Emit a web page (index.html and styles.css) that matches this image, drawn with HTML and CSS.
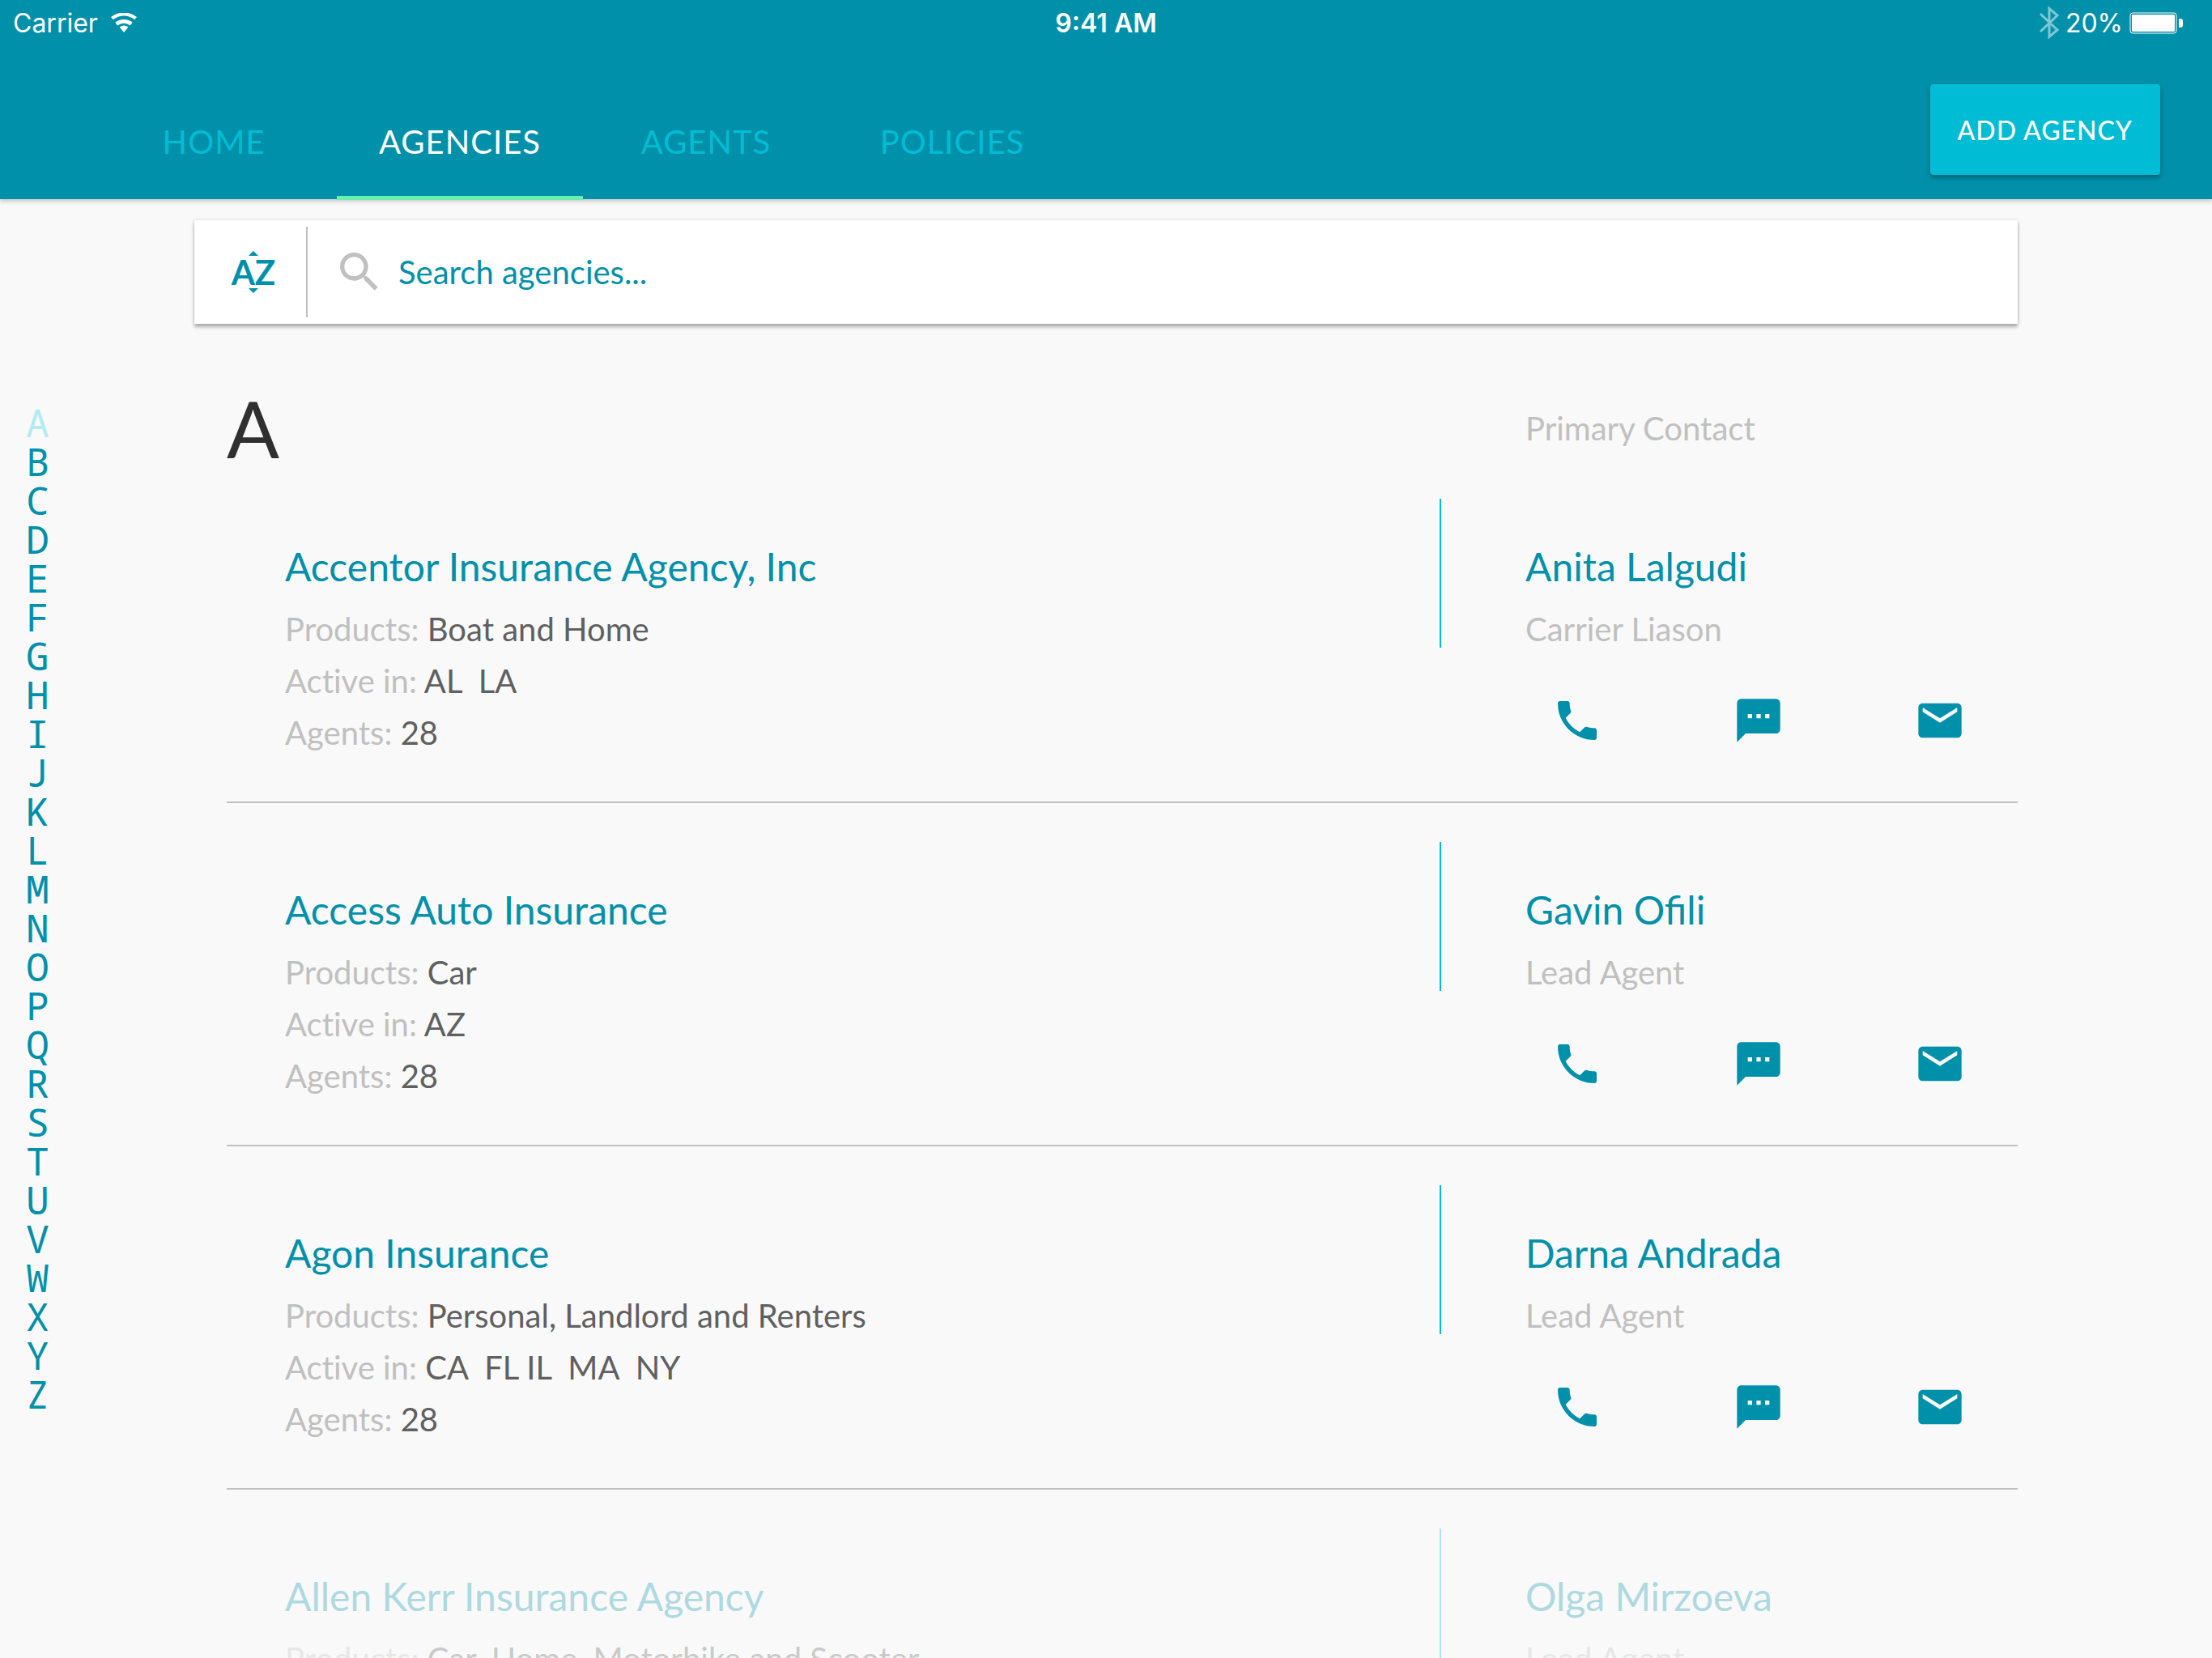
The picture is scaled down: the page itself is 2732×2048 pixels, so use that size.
FILE: index.html
```html
<!DOCTYPE html>
<html lang="en">
<head>
<meta charset="utf-8">
<meta name="viewport" content="width=device-width, initial-scale=1">
<title>Agencies</title>
<link rel="stylesheet" href="styles.css">
</head>
<body>
<svg class="sprite" aria-hidden="true">
  <symbol id="icon-phone" viewBox="0 0 24 24"><path d="M6.62 10.79c1.44 2.83 3.76 5.14 6.59 6.59l2.2-2.2c.27-.27.67-.36 1.02-.24 1.12.37 2.33.57 3.57.57.55 0 1 .45 1 1V20c0 .55-.45 1-1 1-9.39 0-17-7.61-17-17 0-.55.45-1 1-1h3.5c.55 0 1 .45 1 1 0 1.25.2 2.45.57 3.57.11.35.03.74-.25 1.02l-2.2 2.2z"/></symbol>
  <symbol id="icon-message" viewBox="0 0 24 24"><path d="M20 2H4c-1.1 0-1.99.9-1.99 2L2 22l4-4h14c1.1 0 2-.9 2-2V4c0-1.1-.9-2-2-2z"/><path class="icon-cutout" d="M7 9h2v2H7zM11 9h2v2h-2zM15 9h2v2h-2z"/></symbol>
  <symbol id="icon-mail" viewBox="0 0 24 24"><path d="M20 4H4c-1.1 0-1.99.9-1.99 2L2 18c0 1.1.9 2 2 2h16c1.1 0 2-.9 2-2V6c0-1.1-.9-2-2-2z"/><path class="icon-cutout" d="M20 8l-8 5-8-5V6l8 5 8-5v2z"/></symbol>
</svg>

<header class="app-bar">
  <div class="status-bar">
    <div class="status-left">
      <span>Carrier</span>
      <svg class="wifi" viewBox="0 0 32 24" aria-label="Wi-Fi"><path d="M16 24l-5.300-6.600a8.500 8.500 0 0 1 10.600 0zM8.200 15.400l-2.900-3.600a17.300 17.300 0 0 1 21.400 0l-2.900 3.600a12.400 12.400 0 0 0-15.600 0zM2.700 8.200L0 5a25.500 25.500 0 0 1 32 0l-2.700 3.200a21 21 0 0 0-26.600 0z"/></svg>
    </div>
    <span class="status-time">9:41 AM</span>
    <div class="status-right">
      <svg class="bluetooth" viewBox="0 0 24 40" aria-label="Bluetooth"><path d="M1 9l21 20-10 8.500v-35L22 11 1 31"/></svg>
      <span>20%</span>
      <svg class="battery" viewBox="0 0 66 27" aria-label="Battery"><rect class="battery-case" x="1" y="1" width="57" height="25" rx="3"/><rect x="3" y="3" width="53" height="21" rx="1"/><path d="M61 8h2q3 0 3 3v5q0 3-3 3h-2z"/></svg>
    </div>
  </div>
  <div class="toolbar">
    <nav class="tabs">
      <a class="tab" href="#home">HOME</a>
      <a class="tab tab-active" href="#agencies" aria-current="page">AGENCIES</a>
      <a class="tab" href="#agents">AGENTS</a>
      <a class="tab" href="#policies">POLICIES</a>
    </nav>
    <button class="add-button" type="button">ADD AGENCY</button>
  </div>
</header>

<div class="page">
  <nav class="letter-index" aria-label="Jump to letter">
    <a class="letter-current" href="#A">A</a><a href="#B">B</a><a href="#C">C</a><a href="#D">D</a><a href="#E">E</a><a href="#F">F</a><a href="#G">G</a><a href="#H">H</a><a href="#I">I</a><a href="#J">J</a><a href="#K">K</a><a href="#L">L</a><a href="#M">M</a><a href="#N">N</a><a href="#O">O</a><a href="#P">P</a><a href="#Q">Q</a><a href="#R">R</a><a href="#S">S</a><a href="#T">T</a><a href="#U">U</a><a href="#V">V</a><a href="#W">W</a><a href="#X">X</a><a href="#Y">Y</a><a href="#Z">Z</a>
  </nav>

  <main class="content">
    <form class="search" role="search">
      <button class="sort" type="button" aria-label="Sort A to Z">
        <svg class="sort-arrow" viewBox="0 0 12 6"><path d="M0 6l6-6 6 6z"/></svg>
        <span class="sort-text">AZ</span>
        <svg class="sort-arrow" viewBox="0 0 12 6"><path d="M0 0l6 6 6-6z"/></svg>
      </button>
      <label class="search-field">
        <svg class="search-icon" viewBox="0 0 24 24" aria-hidden="true"><path d="M15.500 14h-.79l-.28-.27C15.410 12.590 16 11.110 16 9.500 16 5.910 13.090 3 9.500 3S3 5.910 3 9.500 5.910 16 9.500 16c1.610 0 3.090-.59 4.230-1.570l.27.28v.79l5 4.990L20.490 19l-4.990-5zm-6 0C7.010 14 5 11.990 5 9.500S7.010 5 9.500 5 14 7.010 14 9.500 11.990 14 9.500 14z"/></svg>
        <input class="search-input" type="search" placeholder="Search agencies..." aria-label="Search agencies">
      </label>
    </form>

    <section class="group" id="A">
      <div class="group-head">
        <h1 class="group-letter">A</h1>
        <span class="group-contact">Primary Contact</span>
      </div>

      <article class="agency">
        <div class="agency-info">
          <h2 class="name"><a href="#accentor">Accentor Insurance Agency, Inc</a></h2>
          <p class="fact"><span class="label">Products:</span> Boat and Home</p>
          <p class="fact"><span class="label">Active in:</span> AL&nbsp; LA</p>
          <p class="fact"><span class="label">Agents:</span> 28</p>
        </div>
        <div class="rule"></div>
        <div class="contact">
          <h3 class="name"><a href="#anita">Anita Lalgudi</a></h3>
          <p class="role">Carrier Liason</p>
          <div class="actions">
            <button type="button" aria-label="Call"><svg><use href="#icon-phone"/></svg></button>
            <button type="button" aria-label="Message"><svg><use href="#icon-message"/></svg></button>
            <button type="button" aria-label="Email"><svg><use href="#icon-mail"/></svg></button>
          </div>
        </div>
      </article>

      <article class="agency">
        <div class="agency-info">
          <h2 class="name"><a href="#access">Access Auto Insurance</a></h2>
          <p class="fact"><span class="label">Products:</span> Car</p>
          <p class="fact"><span class="label">Active in:</span> AZ</p>
          <p class="fact"><span class="label">Agents:</span> 28</p>
        </div>
        <div class="rule"></div>
        <div class="contact">
          <h3 class="name"><a href="#gavin">Gavin Ofili</a></h3>
          <p class="role">Lead Agent</p>
          <div class="actions">
            <button type="button" aria-label="Call"><svg><use href="#icon-phone"/></svg></button>
            <button type="button" aria-label="Message"><svg><use href="#icon-message"/></svg></button>
            <button type="button" aria-label="Email"><svg><use href="#icon-mail"/></svg></button>
          </div>
        </div>
      </article>

      <article class="agency">
        <div class="agency-info">
          <h2 class="name"><a href="#agon">Agon Insurance</a></h2>
          <p class="fact"><span class="label">Products:</span> Personal, Landlord and Renters</p>
          <p class="fact"><span class="label">Active in:</span> CA&nbsp; FL IL&nbsp; MA&nbsp; NY</p>
          <p class="fact"><span class="label">Agents:</span> 28</p>
        </div>
        <div class="rule"></div>
        <div class="contact">
          <h3 class="name"><a href="#darna">Darna Andrada</a></h3>
          <p class="role">Lead Agent</p>
          <div class="actions">
            <button type="button" aria-label="Call"><svg><use href="#icon-phone"/></svg></button>
            <button type="button" aria-label="Message"><svg><use href="#icon-message"/></svg></button>
            <button type="button" aria-label="Email"><svg><use href="#icon-mail"/></svg></button>
          </div>
        </div>
      </article>

      <article class="agency agency-faded">
        <div class="agency-info">
          <h2 class="name"><a href="#allen">Allen Kerr Insurance Agency</a></h2>
          <p class="fact"><span class="label">Products:</span> Car, Home, Motorbike and Scooter</p>
        </div>
        <div class="rule"></div>
        <div class="contact">
          <h3 class="name"><a href="#olga">Olga Mirzoeva</a></h3>
          <p class="role">Lead Agent</p>
        </div>
      </article>
    </section>
  </main>
</div>
</body>
</html>
```

FILE: styles.css
```css
:root {
  --teal: #0090aa;
  --cyan: #00bcd4;
  --cyan-light: #b2ebf2;
  --mint: #69f0ae;
  --grey: #c0c0c0;
  --text: #606060;
  --heading: #303030;
  --paper: #f9f9f9;
}

* {
  box-sizing: border-box;
}

body {
  margin: 0;
  height: 100vh;
  display: flex;
  flex-direction: column;
  overflow: hidden;
  background: var(--paper);
  color: var(--text);
  font-family: Lato, "Liberation Sans", sans-serif;
  font-size: 40px;
}

h1, h2, h3, p {
  margin: 0;
  font-weight: 400;
}

a {
  color: inherit;
  text-decoration: none;
}

button {
  padding: 0;
  border: 0;
  background: none;
  color: inherit;
  font: inherit;
  cursor: pointer;
}

svg {
  display: block;
  fill: currentColor;
}

.sprite {
  position: absolute;
  width: 0;
  height: 0;
}

/* App bar */

.app-bar {
  position: relative;
  z-index: 1;
  flex: none;
  background: var(--teal);
  color: #fff;
  box-shadow: 0 2px 6px rgba(0, 0, 0, 0.24);
}

.status-bar {
  display: grid;
  grid-template-columns: 1fr auto 1fr;
  align-items: center;
  height: 56px;
  font-family: Inter, "Liberation Sans", sans-serif;
  font-size: 32px;
}

.status-left,
.status-right {
  display: flex;
  align-items: center;
}

.status-left {
  gap: 16px;
  padding-left: 16px;
}

.status-right {
  justify-content: flex-end;
  gap: 8px;
  padding-right: 36px;
}

.status-time {
  font-weight: 600;
}

.wifi {
  width: 32px;
  height: 24px;
}

.bluetooth {
  width: 24px;
  height: 40px;
  fill: none;
  stroke: currentColor;
  stroke-width: 3;
  opacity: 0.5;
}

.battery {
  width: 66px;
  height: 27px;
}

.battery-case {
  fill: none;
  stroke: currentColor;
  stroke-width: 1;
}

.toolbar {
  display: flex;
  justify-content: space-between;
  align-items: flex-start;
  height: 190px;
  padding: 0 64px 0 112px;
}

.tabs {
  display: flex;
  height: 100%;
}

.tab {
  position: relative;
  width: 304px;
  padding-top: 95px;
  line-height: 48px;
  letter-spacing: 1px;
  text-align: center;
  color: var(--cyan);
}

.tab-active {
  color: #fff;
}

.tab-active::after {
  content: "";
  position: absolute;
  inset: auto 0 -1px;
  height: 5px;
  background: var(--mint);
}

.add-button {
  height: 112px;
  margin-top: 48px;
  padding: 0 34px;
  border-radius: 4px;
  background: var(--cyan);
  font-size: 32px;
  font-weight: 500;
  letter-spacing: 1px;
  box-shadow: 0 3px 6px rgba(0, 0, 0, 0.35);
}

/* Page */

.page {
  display: grid;
  grid-template-columns: 240px 1fr;
  padding-right: 240px;
}

.letter-index {
  display: flex;
  flex-direction: column;
  align-items: flex-start;
  padding: 252px 0 0 32px;
  color: var(--teal);
  font-family: "Noto Sans Mono", "Noto Mono", "Droid Sans Mono", "DejaVu Sans Mono", monospace;
  font-size: 48px;
  line-height: 48px;
}

.letter-current {
  color: var(--cyan-light);
}

.content {
  padding-top: 26px;
}

.search {
  display: flex;
  align-items: center;
  height: 128px;
  background: #fff;
  box-shadow: 0 4px 4px rgba(0, 0, 0, 0.28), 0 0 4px rgba(0, 0, 0, 0.14);
}

.sort {
  display: flex;
  flex-direction: column;
  align-items: center;
  justify-content: center;
  width: 140px;
  height: 112px;
  padding-left: 8px;
  border-right: 2px solid var(--grey);
  color: var(--teal);
}

.sort-text {
  font-size: 42px;
  font-weight: 700;
  line-height: 40px;
}

.sort-arrow {
  width: 12px;
  height: 6px;
}

.search-field {
  display: flex;
  flex: 1;
  align-items: center;
  gap: 16px;
  padding: 0 32px;
}

.search-icon {
  width: 64px;
  height: 64px;
  color: var(--grey);
}

.search-input {
  flex: 1;
  min-width: 0;
  padding: 0;
  border: 0;
  outline: 0;
  background: none;
  color: var(--teal);
  font: inherit;
}

.search-input::placeholder {
  color: var(--teal);
  opacity: 1;
}

/* Agency list */

.group {
  padding: 90px 0 0 40px;
}

.group-head,
.agency {
  display: grid;
  grid-template-columns: 1fr 2px 608px;
  column-gap: 104px;
}

.group-head {
  align-items: center;
  line-height: 78px;
}

.group-letter {
  color: var(--heading);
  font-size: 96px;
}

.group-contact {
  grid-column: 3;
  color: var(--grey);
}

.agency {
  height: 424px;
  border-bottom: 2px solid var(--grey);
  line-height: 64px;
}

.agency-faded {
  opacity: 0.3;
}

.agency-info {
  padding: 100px 0 0 72px;
}

.contact {
  padding-top: 100px;
}

.rule {
  height: 184px;
  margin-top: 48px;
  background: var(--cyan);
}

.name {
  margin-bottom: 13px;
  color: var(--teal);
  font-size: 48px;
}

.fact {
  font-variant-ligatures: none;
}

.label,
.role {
  color: var(--grey);
}

.actions {
  display: flex;
  gap: 160px;
  padding: 49px 0 0 32px;
  color: var(--teal);
}

.actions svg {
  width: 64px;
  height: 64px;
}

.icon-cutout {
  fill: var(--paper);
}
```
